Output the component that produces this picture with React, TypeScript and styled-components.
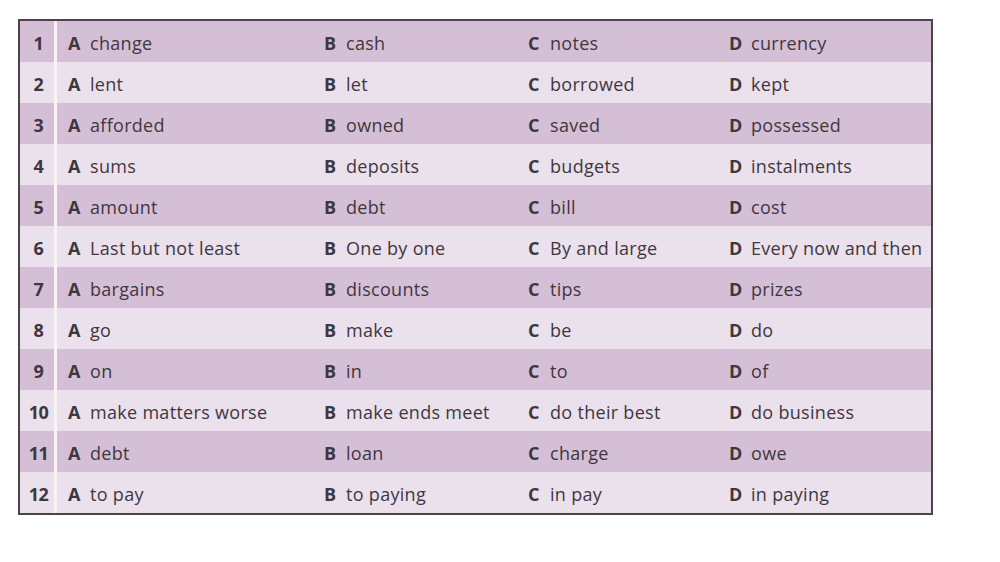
import React from "react";
import styled, { createGlobalStyle } from "styled-components";

const rows: string[][] = [
  ["change", "cash", "notes", "currency"],
  ["lent", "let", "borrowed", "kept"],
  ["afforded", "owned", "saved", "possessed"],
  ["sums", "deposits", "budgets", "instalments"],
  ["amount", "debt", "bill", "cost"],
  ["Last but not least", "One by one", "By and large", "Every now and then"],
  ["bargains", "discounts", "tips", "prizes"],
  ["go", "make", "be", "do"],
  ["on", "in", "to", "of"],
  ["make matters worse", "make ends meet", "do their best", "do business"],
  ["debt", "loan", "charge", "owe"],
  ["to pay", "to paying", "in pay", "in paying"],
];

const letters = ["A", "B", "C", "D"];

const GlobalStyle = createGlobalStyle`
  body {
    margin: 0;
    background: #ffffff;
    font-family: "Open Sans", "Noto Sans", sans-serif;
  }
`;

const Page = styled.div`
  width: 1000px;
  height: 562px;
  padding: 19px 0 0 18px;
  box-sizing: border-box;
`;

const Table = styled.div`
  width: 911px;
  border: 2px solid #4c434b;
  display: flex;
  flex-direction: column;
`;

const Row = styled.div<{ $dark: boolean }>`
  display: grid;
  grid-template-columns: 34px 3px 256px 204px 201px 1fr;
  height: 41px;
  align-items: center;
  padding-top: 3px;
  box-sizing: border-box;
  background: ${(p) => (p.$dark ? "#d5bfd7" : "#ebe1ec")};
  color: #3f373e;
  font-size: 18px;
`;

const Num = styled.div`
  text-align: center;
  font-weight: 700;
  letter-spacing: -0.5px;
  padding-left: 3px;
`;

const Divider = styled.div`
  align-self: stretch;
  margin-top: -3px;
  background: #f7f3f7;
`;

const Cell = styled.div`
  display: flex;
  align-items: baseline;
  padding-left: 11px;
  white-space: nowrap;
`;

const Letter = styled.span`
  font-weight: 700;
  width: 22px;
  flex-shrink: 0;
`;

const Word = styled.span`
  letter-spacing: 0.3px;
`;

export default function App() {
  return (
    <>
      <GlobalStyle />
      <Page>
        <Table>
          {rows.map((opts, i) => (
            <Row key={i} $dark={i % 2 === 0}>
              <Num>{i + 1}</Num>
              <Divider />
              {opts.map((w, j) => (
                <Cell key={j}>
                  <Letter>{letters[j]}</Letter>
                  <Word>{w}</Word>
                </Cell>
              ))}
            </Row>
          ))}
        </Table>
      </Page>
    </>
  );
}
